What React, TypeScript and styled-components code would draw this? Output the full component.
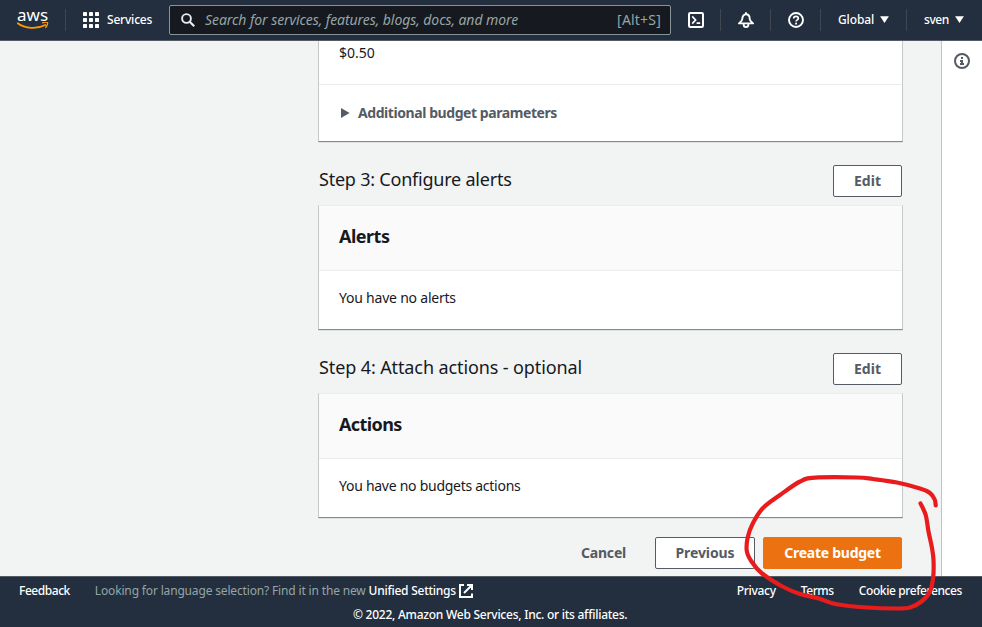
import React from "react";
import styled, { createGlobalStyle } from "styled-components";

const GlobalStyle = createGlobalStyle`
  * { box-sizing: border-box; }
  body { margin: 0; overflow: hidden; font-family: "Noto Sans", "Open Sans", sans-serif; color: #16191f; }
  button { font-family: inherit; cursor: pointer; }
`;

const Page = styled.div`
  position: relative;
  display: flex;
  flex-direction: column;
  width: 982px;
  height: 627px;
  overflow: hidden;
  background: #f2f3f3;
`;

const Label = styled.span<{ $track?: number }>`
  letter-spacing: ${(p) => p.$track ?? 0}px;
  white-space: pre;
`;

/* ---------- top bar ---------- */

const TopBar = styled.header`
  display: flex;
  align-items: center;
  flex: none;
  height: 41px;
  padding: 0 17px 1px 17px;
  background: #232f3e;
  border-bottom: 1px solid #545b64;
  color: #fff;
  font-size: 12px;
  font-weight: 500;
`;

const Divider = styled.i`
  flex: none;
  width: 1px;
  height: 22px;
  background: #414750;
`;

const ServicesButton = styled.div`
  display: flex;
  align-items: center;
  gap: 8px;
  flex: none;
  width: 103px;
  padding-left: 17px;
`;

const SearchBox = styled.div`
  display: flex;
  align-items: center;
  flex: none;
  width: 502px;
  height: 30px;
  margin-top: 1px;
  padding: 0 9px 1px 11px;
  background: #16191f;
  border: 1px solid #879596;
  border-radius: 2px;
  color: #95a5a6;
  font-size: 14px;
  font-weight: 400;

  svg { margin: 1px 10px 0 0; }
`;

const Placeholder = styled.span`
  flex: 1;
  font-style: italic;
  letter-spacing: -0.07px;
`;

const IconSlot = styled.div<{ $w: number }>`
  display: flex;
  align-items: center;
  justify-content: center;
  flex: none;
  width: ${(p) => p.$w}px;
`;

const MenuTrigger = styled.div<{ $w: number }>`
  display: flex;
  align-items: center;
  flex: none;
  width: ${(p) => p.$w}px;
  padding-left: 17px;
  gap: 6px;
`;

/* ---------- main area ---------- */

const Body = styled.div`
  display: flex;
  flex: none;
  height: 535px;
`;

const Content = styled.main`
  width: 941px;
  padding: 0 38px 0 318px;
`;

const HelpRail = styled.aside`
  display: flex;
  justify-content: center;
  width: 41px;
  padding-top: 12px;
  background: #fff;
  border-left: 1px solid #bfc5c6;
`;

const Card = styled.section<{ $open?: boolean }>`
  background: #fff;
  border: 1px solid #c3c8c9;
  border-top: ${(p) => (p.$open ? "0" : "1px solid #eaeded")};
  border-bottom-color: #7f8b8d;
  box-shadow: 0 1px 0 #dfe2e2;
  font-size: 14px;
`;

const CardHeader = styled.h2`
  display: flex;
  align-items: center;
  height: 65px;
  margin: 0;
  padding: 0 20px 5px;
  background: #fafafa;
  border-bottom: 1px solid #eaeded;
  font-size: 18px;
  font-weight: 700;
`;

const CardBody = styled.div`
  display: flex;
  align-items: center;
  height: 58px;
  padding: 0 20px 6px;
`;

const AmountRow = styled.div`
  height: 44px;
  padding: 2px 20px 0;
  border-bottom: 1px solid #eaeded;
  line-height: 20px;
`;

const Expandable = styled.div`
  display: flex;
  align-items: center;
  gap: 8px;
  height: 56px;
  padding: 0 0 2px 22px;
  color: #545b64;
  font-weight: 700;

  svg { margin-top: 1px; }
`;

const StepRow = styled.div`
  display: flex;
  justify-content: space-between;
  height: 32px;
  margin: 23px 1px 8px;
`;

const StepTitle = styled.h1`
  margin: 0;
  font-size: 18px;
  font-weight: 400;
  line-height: 29px;
`;

const Button = styled.button<{ $kind?: "normal" | "primary" | "link"; $w: number }>`
  width: ${(p) => p.$w}px;
  height: 32px;
  padding: 0;
  border: 1px solid
    ${(p) => (p.$kind === "primary" ? "#ec7211" : p.$kind === "link" ? "transparent" : "#545b64")};
  border-radius: 2px;
  background: ${(p) => (p.$kind === "primary" ? "#ec7211" : p.$kind === "link" ? "transparent" : "#fff")};
  color: ${(p) => (p.$kind === "primary" ? "#fff" : "#545b64")};
  font-size: 14px;
  font-weight: 700;
  line-height: 30px;
`;

const ActionRow = styled.div`
  display: flex;
  justify-content: flex-end;
  gap: 8px;
  margin: 19px 1px 0;
`;

/* ---------- footer ---------- */

const Footer = styled.footer`
  flex: 1;
  padding: 2px 20px 0 19px;
  background: #232f3e;
  border-top: 1px solid #545b64;
  color: #fff;
  font-size: 12px;
  font-weight: 500;
`;

const FooterLinks = styled.div`
  display: flex;
  align-items: center;
  height: 23px;
`;

const LanguageHint = styled.div`
  display: flex;
  align-items: center;
  flex: 1;
  margin-left: 25px;
`;

const Muted = styled(Label)`
  color: #95a5a6;
  font-weight: 400;
`;

const LegalLinks = styled.nav`
  display: flex;
  gap: 25px;
`;

const Copyright = styled.div`
  height: 24px;
  line-height: 25px;
  padding-left: 334px;
`;

/* ---------- hand-drawn mark over the page ---------- */

const Overlay = styled.svg`
  position: absolute;
  inset: 0;
  pointer-events: none;
`;

const MARK: [number, number][] = [
  [920.5, 503.5], [925.7, 515], [928.5, 531.5], [932, 548], [933.5, 560], [933.2, 577],
  [930, 591.5], [921.5, 601.5], [910, 607.5], [896.5, 608.5], [866.5, 607.5], [836.5, 604.3],
  [819, 598.5], [800, 594], [781.5, 586], [761.5, 573], [751.5, 561.5], [746.8, 551],
  [747.8, 537], [753, 523], [763, 508], [780, 495], [800, 481.5], [815, 477.7], [857, 477.5],
  [873, 479], [897, 482.5], [920, 488.5], [930, 493], [934.7, 499.5], [935.7, 505.5],
];

const smoothPath = (pts: [number, number][]) =>
  pts.slice(1).reduce((d, p, i) => {
    const a = pts[Math.max(i - 1, 0)];
    const b = pts[i];
    const c = pts[Math.min(i + 2, pts.length - 1)];
    return `${d} C${b[0] + (p[0] - a[0]) / 6} ${b[1] + (p[1] - a[1]) / 6} ${p[0] - (c[0] - b[0]) / 6} ${
      p[1] - (c[1] - b[1]) / 6
    } ${p[0]} ${p[1]}`;
  }, `M${pts[0][0]} ${pts[0][1]}`);

/* ---------- icons ---------- */

const LogoBox = styled.div`
  display: flex;
  flex-direction: column;
  flex: none;
  width: 48px;
  height: 24px;
  margin-top: 3px;
`;

const LogoWord = styled.span`
  height: 13px;
  font-size: 17px;
  font-weight: 400;
  line-height: 11px;
  letter-spacing: 0;
`;

const Logo = () => (
  <LogoBox>
    <LogoWord>aws</LogoWord>
    <svg width="32" height="10" viewBox="0 0 32 10" fill="none">
      <path d="M.8 1.2C8 6.6 20 7.4 28.3 3" stroke="#f90" strokeWidth="1.8" strokeLinecap="round" />
      <path d="M25.5.9c2-.7 4.6-.6 5 0s-.3 3-1.8 4.6" stroke="#f90" strokeWidth="1.3" strokeLinecap="round" />
    </svg>
  </LogoBox>
);

const GridIcon = () => (
  <svg width="16" height="16" fill="#fff">
    {[0, 6, 12].map((y) => [0, 6, 12].map((x) => <rect key={`${x}-${y}`} x={x} y={y} width="4" height="4" rx=".4" />))}
  </svg>
);

const SearchIcon = () => (
  <svg width="14" height="14" viewBox="0 0 14 14" fill="none" stroke="#eaeded" strokeWidth="1.9">
    <circle cx="5.5" cy="5.5" r="4.4" />
    <path d="M8.7 8.7l4.5 4.5" strokeWidth="2.2" />
  </svg>
);

const ShellIcon = () => (
  <svg width="16" height="16" viewBox="0 0 16 16" fill="none" stroke="#fff" strokeWidth="2">
    <rect x="1" y="1" width="14" height="14" rx="1.2" />
    <path d="M4.2 4.4L7.6 8l-3.4 3.6M8.6 11.2h3.6" strokeWidth="1.7" />
  </svg>
);

const BellIcon = () => (
  <svg width="16" height="16" viewBox="0 0 16 16" fill="none" stroke="#fff" strokeWidth="1.9" strokeLinejoin="round">
    <path d="M8 .2v2M4.3 7C4.3 4.1 5.8 2.3 8 2.3s3.7 1.8 3.7 4.7c0 1.9 1.5 3 3.3 4.4H1C2.8 10 4.3 8.9 4.3 7z" />
    <path d="M5.7 11.8v1.1c0 1.2 1 2.1 2.3 2.1s2.3-.9 2.3-2.1v-1.1" />
  </svg>
);

const HelpIcon = () => (
  <svg width="16" height="16" viewBox="0 0 16 16" fill="none" stroke="#fff" strokeWidth="1.9">
    <circle cx="8" cy="8" r="7" />
    <path d="M5.7 6.6c0-1.4 1-2.3 2.3-2.3s2.3.9 2.3 2.1c0 1.5-2.2 1.6-2.2 3.2" strokeWidth="1.7" />
    <path d="M8.1 10.7v1.8" strokeWidth="1.9" />
  </svg>
);

const InfoIcon = () => (
  <svg width="16" height="16" viewBox="0 0 16 16" fill="none" stroke="#545b64" strokeWidth="2">
    <circle cx="8" cy="8" r="7" />
    <path d="M6 8h3M8 7v5M6 11h4" />
    <path d="M7 5h2" />
  </svg>
);

const CaretDown = () => (
  <svg width="9" height="7" viewBox="0 0 9 7" fill="#fff">
    <path d="M.1.2h8.8L4.5 6.9z" />
  </svg>
);

const CaretRight = () => (
  <svg width="9" height="10" viewBox="0 0 9 10" fill="#545b64">
    <path d="M0 0v10l8.6-5z" />
  </svg>
);

const ExternalIcon = () => (
  <svg width="14" height="14" viewBox="0 0 14 14" fill="none" stroke="#fff" strokeWidth="2">
    <path d="M5 1H1v12h12V9.5M8 1h5v5M13 1L5 9" />
  </svg>
);

const ExternalLink = styled.span`
  display: flex;
  align-items: center;
  gap: 3px;
`;

export default function App() {
  return (
    <Page>
      <GlobalStyle />
      <TopBar>
        <Logo />
        <Divider />
        <ServicesButton>
          <GridIcon />
          <Label $track={-0.2}>Services</Label>
        </ServicesButton>
        <SearchBox>
          <SearchIcon />
          <Placeholder>Search for services, features, blogs, docs, and more</Placeholder>
          <Label $track={0.2}>[Alt+S]</Label>
        </SearchBox>
        <IconSlot $w={49}><ShellIcon /></IconSlot>
        <Divider />
        <IconSlot $w={49}><BellIcon /></IconSlot>
        <Divider />
        <IconSlot $w={49}><HelpIcon /></IconSlot>
        <Divider />
        <MenuTrigger $w={85}><Label $track={-0.1}>Global</Label><CaretDown /></MenuTrigger>
        <Divider />
        <MenuTrigger $w={58}><Label $track={-0.4}>sven</Label><CaretDown /></MenuTrigger>
      </TopBar>

      <Body>
        <Content>
          <Card $open>
            <AmountRow>$0.50</AmountRow>
            <Expandable>
              <CaretRight />
              <Label $track={-0.43}>Additional budget parameters</Label>
            </Expandable>
          </Card>

          <StepRow>
            <StepTitle><Label $track={-0.22}>Step 3: Configure alerts</Label></StepTitle>
            <Button $w={69}>Edit</Button>
          </StepRow>
          <Card>
            <CardHeader><Label $track={-0.5}>Alerts</Label></CardHeader>
            <CardBody><Label $track={-0.22}>You have no alerts</Label></CardBody>
          </Card>

          <StepRow>
            <StepTitle><Label $track={-0.11}>Step 4: Attach actions - optional</Label></StepTitle>
            <Button $w={69}>Edit</Button>
          </StepRow>
          <Card>
            <CardHeader><Label $track={-0.6}>Actions</Label></CardHeader>
            <CardBody><Label $track={-0.27}>You have no budgets actions</Label></CardBody>
          </Card>

          <ActionRow>
            <Button $kind="link" $w={87}><Label $track={-0.2}>Cancel</Label></Button>
            <Button $w={100}><Label $track={-0.1}>Previous</Label></Button>
            <Button $kind="primary" $w={139}><Label $track={-0.25}>Create budget</Label></Button>
          </ActionRow>
        </Content>
        <HelpRail><InfoIcon /></HelpRail>
      </Body>

      <Footer>
        <FooterLinks>
          <Label $track={-0.45}>Feedback</Label>
          <LanguageHint>
            <Muted $track={-0.16}>Looking for language selection? Find it in the new </Muted>
            <ExternalLink><Label $track={-0.25}>Unified Settings</Label><ExternalIcon /></ExternalLink>
          </LanguageHint>
          <LegalLinks>
            <Label $track={-0.3}>Privacy</Label>
            <Label $track={-0.4}>Terms</Label>
            <Label $track={-0.4}>Cookie preferences</Label>
          </LegalLinks>
        </FooterLinks>
        <Copyright><Label $track={-0.25}>© 2022, Amazon Web Services, Inc. or its affiliates.</Label></Copyright>
      </Footer>

      <Overlay width="982" height="627" viewBox="0 0 982 627" fill="none">
        <path d={smoothPath(MARK)} stroke="#e81c1c" strokeWidth="4.2" strokeLinecap="round" strokeLinejoin="round" />
      </Overlay>
    </Page>
  );
}
